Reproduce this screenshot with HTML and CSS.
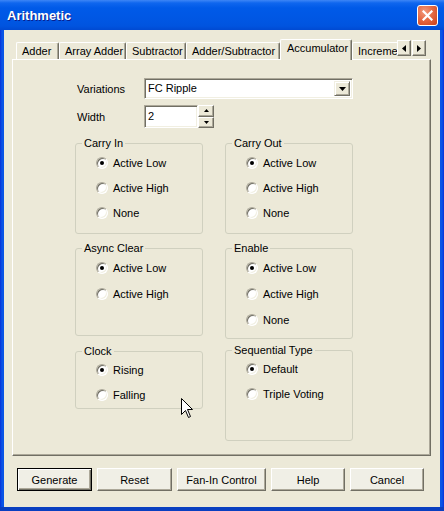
FILE: index.html
```html
<!DOCTYPE html>
<html>
<head>
<meta charset="utf-8">
<link rel="stylesheet" href="styles.css">
</head>
<body>
<div class="window">
  <div class="titlebar">
    <span class="title">Arithmetic</span>
    <span class="close">
      <svg width="11" height="11" viewBox="0 0 11 11"><path d="M1.5 1.5 L9.5 9.5 M9.5 1.5 L1.5 9.5" stroke="#fff" stroke-width="2.2" stroke-linecap="square"/></svg>
    </span>
  </div>
  <div class="client">
    <div class="tabrow">
      <div class="tabs">
        <div class="tab t-adder">Adder</div>
        <div class="tab t-array">Array Adder</div>
        <div class="tab t-sub">Subtractor</div>
        <div class="tab t-addsub">Adder/Subtractor</div>
        <div class="tab t-acc active">Accumulator</div>
        <div class="tab t-inc">Incrementer</div>
      </div>
      <div class="tabscroll">
        <span class="sbtn"><svg width="4" height="7" viewBox="0 0 4 7"><path d="M4 0 L0 3.5 L4 7 Z" fill="#000"/></svg></span>
        <span class="sbtn"><svg width="4" height="7" viewBox="0 0 4 7"><path d="M0 0 L4 3.5 L0 7 Z" fill="#000"/></svg></span>
      </div>
    </div>
    <div class="panel">
      <div class="field">
        <span class="flabel">Variations</span>
        <div class="combo">
          <span class="combo-text">FC Ripple</span>
          <span class="combo-btn"><svg width="7" height="4" viewBox="0 0 7 4"><path d="M0 0 L7 0 L3.5 4 Z" fill="#000"/></svg></span>
        </div>
      </div>
      <div class="field field-width">
        <span class="flabel">Width</span>
        <div class="spin">
          <span class="spin-input">2</span>
          <span class="spin-btns">
            <span class="spbtn"><svg width="5" height="3" viewBox="0 0 5 3"><path d="M0 3 L5 3 L2.5 0 Z" fill="#000"/></svg></span>
            <span class="spbtn"><svg width="5" height="3" viewBox="0 0 5 3"><path d="M0 0 L5 0 L2.5 3 Z" fill="#000"/></svg></span>
          </span>
        </div>
      </div>

      <div class="grow grow1">
        <fieldset class="group g-tall">
          <legend>Carry In</legend>
          <div class="opts">
            <div class="opt"><span class="radio on"></span>Active Low</div>
            <div class="opt"><span class="radio"></span>Active High</div>
            <div class="opt"><span class="radio"></span>None</div>
          </div>
        </fieldset>
        <fieldset class="group g-tall">
          <legend>Carry Out</legend>
          <div class="opts">
            <div class="opt"><span class="radio on"></span>Active Low</div>
            <div class="opt"><span class="radio"></span>Active High</div>
            <div class="opt"><span class="radio"></span>None</div>
          </div>
        </fieldset>
      </div>

      <div class="grow grow2">
        <fieldset class="group g-async">
          <legend>Async Clear</legend>
          <div class="opts wide">
            <div class="opt"><span class="radio on"></span>Active Low</div>
            <div class="opt"><span class="radio"></span>Active High</div>
          </div>
        </fieldset>
        <fieldset class="group g-tall">
          <legend>Enable</legend>
          <div class="opts wide">
            <div class="opt"><span class="radio on"></span>Active Low</div>
            <div class="opt"><span class="radio"></span>Active High</div>
            <div class="opt"><span class="radio"></span>None</div>
          </div>
        </fieldset>
      </div>

      <div class="grow grow3">
        <fieldset class="group g-clock">
          <legend>Clock</legend>
          <div class="opts tight">
            <div class="opt"><span class="radio on"></span>Rising</div>
            <div class="opt"><span class="radio"></span>Falling</div>
          </div>
        </fieldset>
        <fieldset class="group g-tall">
          <legend>Sequential Type</legend>
          <div class="opts tight">
            <div class="opt"><span class="radio on"></span>Default</div>
            <div class="opt"><span class="radio"></span>Triple Voting</div>
          </div>
        </fieldset>
      </div>
    </div>

    <div class="buttons">
      <span class="btn default">Generate</span>
      <span class="btn">Reset</span>
      <span class="btn b-fan">Fan-In Control</span>
      <span class="btn b-help">Help</span>
      <span class="btn b-cancel">Cancel</span>
    </div>
  </div>
  <svg class="cursor" width="13" height="21" viewBox="0 0 13 21">
    <path d="M0.5 0.5 L0.5 16.5 L4.5 12.5 L7.5 19.5 L9.5 18.5 L6.5 11.5 L11.5 11.5 Z" fill="#fff" stroke="#000" stroke-width="1" stroke-linejoin="miter"/>
  </svg>
</div>
</body>
</html>
```

FILE: styles.css
```css
* { box-sizing: border-box; }

html, body {
  margin: 0;
  padding: 0;
  background: #ece9d8;
}

body {
  font-family: "Liberation Sans", Arial, sans-serif;
  font-size: 11px;
  color: #000;
}

.window {
  position: relative;
  width: 444px;
  height: 511px;
  display: flex;
  flex-direction: column;
  background: linear-gradient(to right, #0831d9 0, #0a54e6 2px, #0a54e6 442px, #0831d9 444px);
  border-bottom: 4px solid #0a3fc0;
  overflow: hidden;
}

/* Title bar */
.titlebar {
  height: 30px;
  flex: none;
  display: flex;
  align-items: center;
  justify-content: space-between;
  padding: 0 6px 0 7px;
  background: linear-gradient(to bottom, #3d86f6 0, #0f66ee 3px, #005ae8 8px, #0057e4 18px, #0054df 26px, #004ad2 30px);
}

.title {
  font-family: "Liberation Sans", Arial, sans-serif;
  font-weight: bold;
  font-size: 13px;
  color: #fff;
  text-shadow: 1px 1px 0 #0a1e8c;
  margin-top: 1px;
}

.close {
  width: 21px;
  height: 21px;
  border: 1px solid #fff;
  border-radius: 3px;
  background: radial-gradient(circle at 35% 30%, #f29a7c 0, #e56a44 45%, #cc3f18 100%);
  display: flex;
  align-items: center;
  justify-content: center;
  margin-top: 1px;
}

.close svg { display: block; }

/* Client area */
.client {
  flex: 1;
  margin: 0 4px;
  background: #ece9d8;
  padding: 9px 9px 0 8px;
  display: flex;
  flex-direction: column;
}

/* Tabs */
.tabrow {
  position: relative;
  z-index: 1;
  height: 21px;
  display: flex;
  align-items: flex-start;
  padding-left: 4px;
}

.tabs {
  flex: 1;
  display: flex;
  align-items: flex-end;
  height: 21px;
  overflow: hidden;
}

.tab {
  flex: none;
  height: 17px;
  margin-bottom: 1px;
  padding: 1px 0 0 5px;
  line-height: 14px;
  white-space: nowrap;
  overflow: hidden;
  border-top: 1px solid #fff;
  border-left: 1px solid #fff;
  border-right: 1px solid #716f64;
  border-radius: 2px 2px 0 0;
  box-shadow: inset -1px 0 0 #aca899;
  background: #ece9d8;
}

.t-adder { width: 43px; }
.t-array { width: 67px; }
.t-sub { width: 60px; }
.t-addsub { width: 94px; }
.t-acc { width: 72px; padding-left: 6px; }
.t-inc { width: 70px; }

.tab.active {
  height: 21px;
  margin-bottom: 0;
  padding-top: 1px;
  line-height: 15px;
  position: relative;
  z-index: 2;
}

.tabscroll {
  flex: none;
  display: flex;
  margin-top: 1px;
  margin-right: 5px;
  gap: 1px;
}

.sbtn {
  width: 14px;
  height: 16px;
  display: flex;
  align-items: center;
  justify-content: center;
  background: #ece9d8;
  border-top: 1px solid #fff;
  border-left: 1px solid #fff;
  border-right: 1px solid #716f64;
  border-bottom: 1px solid #716f64;
  box-shadow: inset -1px -1px 0 #aca899;
}

.sbtn svg { display: block; }

/* Panel */
.panel {
  height: 397px;
  margin-top: -1px;
  border-top: 1px solid #fff;
  border-left: 1px solid #fff;
  border-right: 1px solid #716f64;
  border-bottom: 1px solid #716f64;
  box-shadow: inset -1px -1px 0 #aca899;
  padding: 18px 0 0 62px;
}

.field {
  display: flex;
  align-items: center;
  height: 21px;
}

.field-width {
  margin-top: 6px;
  height: 23px;
}

.flabel {
  width: 69px;
  padding-left: 2px;
}

.combo {
  width: 209px;
  height: 21px;
  display: flex;
  align-items: stretch;
  background: #fff;
  border-top: 1px solid #aca899;
  border-left: 1px solid #aca899;
  border-right: 1px solid #fff;
  border-bottom: 1px solid #fff;
  box-shadow: inset 1px 1px 0 #716f64, inset -1px -1px 0 #f1efe2;
  padding: 2px;
}

.combo-text {
  flex: 1;
  padding-left: 1px;
  line-height: 15px;
}

.combo-btn {
  width: 16px;
  display: flex;
  align-items: center;
  justify-content: center;
  background: #ece9d8;
  border-top: 1px solid #f1efe2;
  border-left: 1px solid #f1efe2;
  border-right: 1px solid #716f64;
  border-bottom: 1px solid #716f64;
  box-shadow: inset 1px 1px 0 #fff, inset -1px -1px 0 #aca899;
}

.combo-btn svg { display: block; }

.spin {
  display: flex;
  height: 23px;
}

.spin-input {
  width: 54px;
  height: 23px;
  background: #fff;
  border-top: 1px solid #aca899;
  border-left: 1px solid #aca899;
  border-right: 1px solid #fff;
  border-bottom: 1px solid #fff;
  box-shadow: inset 1px 1px 0 #716f64, inset -1px -1px 0 #f1efe2;
  padding: 2px 0 0 3px;
  line-height: 17px;
}

.spin-btns {
  width: 16px;
  display: flex;
  flex-direction: column;
}

.spbtn {
  flex: 1;
  display: flex;
  align-items: center;
  justify-content: center;
  background: #ece9d8;
  border-top: 1px solid #fff;
  border-left: 1px solid #fff;
  border-right: 1px solid #716f64;
  border-bottom: 1px solid #716f64;
  box-shadow: inset -1px -1px 0 #aca899;
}

.spbtn svg { display: block; }

/* Group boxes */
.grow {
  display: flex;
  align-items: flex-start;
  gap: 22px;
}

.grow1 { margin-top: 9px; }
.grow2 { margin-top: 8px; }
.grow3 { margin-top: 5px; }

.group {
  margin: 0;
  padding: 0 0 0 6px;
  width: 128px;
  min-width: 0;
  border: 1px solid #d0d0bf;
  border-radius: 3px;
}

.group legend {
  padding: 0 2px;
  line-height: 12px;
  font-size: 11px;
}

.g-tall { height: 97px; }
.g-async { height: 94px; }
.g-clock { height: 64px; margin-top: 1px; }

.opts {
  padding: 1px 0 0 14px;
}

.opt {
  height: 25px;
  display: flex;
  align-items: center;
  gap: 5px;
  white-space: nowrap;
}

.opts.wide .opt { height: 26px; }
.opts.tight { padding-top: 0; }

.radio {
  flex: none;
  position: relative;
  width: 12px;
  height: 12px;
  border-radius: 50%;
  background: #fff;
  border: 1px solid;
  border-color: #aca899 #fff #fff #aca899;
  box-shadow: inset 1px 1px 0 #716f64, inset -1px -1px 0 #f1efe2;
}

.radio.on::after {
  content: "";
  position: absolute;
  left: 3px;
  top: 3px;
  width: 4px;
  height: 4px;
  border-radius: 50%;
  background: #000;
}

/* Buttons */
.buttons {
  display: flex;
  gap: 5px;
  margin: 12px 0 0 5px;
}

.btn {
  width: 75px;
  height: 23px;
  display: flex;
  align-items: center;
  justify-content: center;
  background: #f0efe6;
  border-top: 1px solid #fff;
  border-left: 1px solid #fff;
  border-right: 1px solid #716f64;
  border-bottom: 1px solid #716f64;
  box-shadow: inset -1px -1px 0 #aca899;
}

.btn.default {
  border: 1px solid #000;
  box-shadow: inset 1px 1px 0 #fff, inset -1px -1px 0 #716f64, inset -2px -2px 0 #aca899;
}

.b-fan { width: 89px; }
.b-help { width: 74px; }
.b-cancel { width: 74px; }

/* Mouse pointer overlay */
.cursor {
  position: absolute;
  left: 181px;
  top: 398px;
}
```
